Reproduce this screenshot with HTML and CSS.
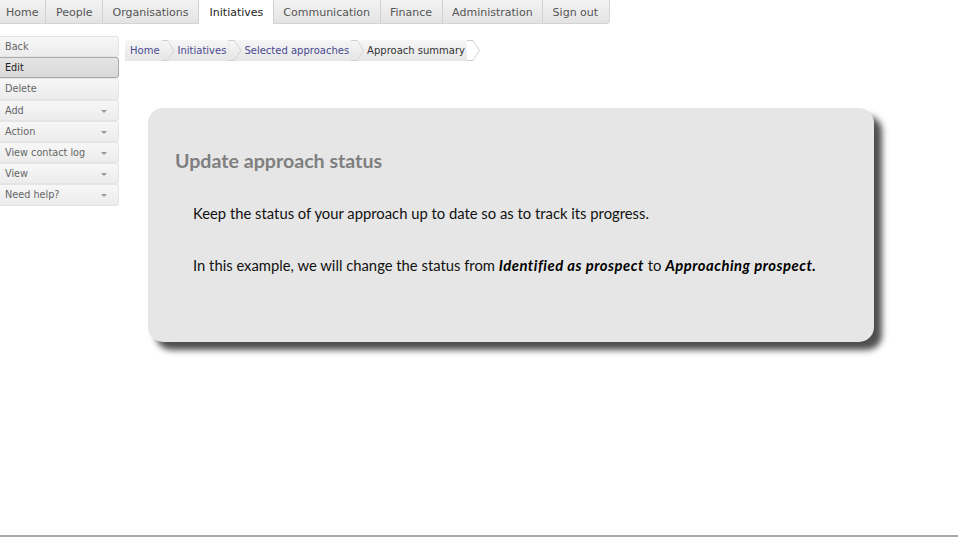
FILE: index.html
```html
<!DOCTYPE html>
<html>
<head>
<meta charset="utf-8">
<link rel="stylesheet" href="styles.css">
</head>
<body>
<nav class="topnav">
  <a class="tab first">Home</a>
  <a class="tab">People</a>
  <a class="tab">Organisations</a>
  <a class="tab active">Initiatives</a>
  <a class="tab">Communication</a>
  <a class="tab">Finance</a>
  <a class="tab">Administration</a>
  <a class="tab last">Sign out</a>
</nav>
<div class="main">
  <aside class="side">
    <div class="item">Back</div>
    <div class="item sel">Edit</div>
    <div class="item">Delete</div>
    <div class="item dd">Add<span class="arr"></span></div>
    <div class="item dd">Action<span class="arr"></span></div>
    <div class="item dd">View contact log<span class="arr"></span></div>
    <div class="item dd">View<span class="arr"></span></div>
    <div class="item dd">Need help?<span class="arr"></span></div>
  </aside>
  <section class="content">
    <div class="crumbs">
      <span class="crumb link">Home</span>
      <span class="crumb link">Initiatives</span>
      <span class="crumb link">Selected approaches</span>
      <span class="crumb cur">Approach summary</span>
    </div>
    <div class="card">
      <h2 class="title">Update approach status</h2>
      <p class="txt">Keep the status of your approach up to date so as to track its progress.</p>
      <p class="txt">In this example, we will change the status from <b><i>Identified as prospect</i></b> to <b><i>Approaching prospect.</i></b></p>
    </div>
  </section>
</div>
<div class="bottomline"></div>
</body>
</html>
```

FILE: styles.css
```css
html, body {
  margin: 0;
  padding: 0;
  background: #fff;
}
body {
  width: 958px;
  height: 537px;
  position: relative;
  overflow: hidden;
  font-family: "DejaVu Sans", Verdana, sans-serif;
}
.topnav {
  display: flex;
  width: max-content;
  height: 23px;
  border: 1px solid #d4d4d4;
  border-top: none;
  border-left: none;
  border-radius: 0 0 4px 0;
  background: linear-gradient(#f3f3f3, #e3e3e3);
}
.tab {
  display: flex;
  align-items: center;
  padding: 1px 9.5px 0 9.5px;
  font-size: 11px;
  color: #555;
  border-right: 1px solid #d0d0d0;
  height: 23px;
  box-sizing: border-box;
}
.tab.first { padding-left: 6px; padding-right: 7px; }
.tab.last { border-right: none; padding-right: 11px; }
.tab.active {
  background: #fff;
  color: #222;
  border-left: 1px solid #d0d0d0;
  margin-left: -1px;
  height: 24px;
  padding: 1px 9.5px 0 10.5px;
}
.main {
  display: flex;
  gap: 6px;
  margin-top: 12px;
}
.side {
  width: 119px;
  display: flex;
  flex-direction: column;
}
.item {
  height: 21.2px;
  box-sizing: border-box;
  border: 1px solid #e4e4e4;
  border-left: none;
  border-radius: 0 3px 3px 0;
  background: linear-gradient(#f7f7f7, #ececec);
  font-size: 9.7px;
  color: #666;
  padding-left: 5px;
  display: flex;
  align-items: center;
  position: relative;
}
.item.sel {
  background: linear-gradient(#e4e4e4, #d9d9d9);
  border: 1px solid #aaa;
  border-left: none;
  color: #222;
}
.arr {
  position: absolute;
  right: 11px;
  top: 9px;
  width: 0;
  height: 0;
  border-left: 3px solid transparent;
  border-right: 3px solid transparent;
  border-top: 3px solid #999;
}
.content {
  flex: 1;
  display: flex;
  flex-direction: column;
}
.crumbs {
  display: flex;
  height: 21px;
  margin-top: 4px;
  width: max-content;
}
.crumb {
  position: relative;
  display: flex;
  align-items: center;
  font-size: 10px;
  padding: 0 9px 0 5px;
  background: linear-gradient(#f6f6f6, #e6e6e6);
}
.crumb + .crumb { padding-left: 9px; }
.crumb::after {
  content: "";
  position: absolute;
  right: -5px;
  top: 1px;
  width: 12px;
  height: 19px;
  background: linear-gradient(#f6f6f6, #e6e6e6);
  clip-path: polygon(0 0, 6px 0, 12px 50%, 6px 100%, 0 100%);
  z-index: 1;
}
.crumb::before {
  content: "";
  position: absolute;
  right: -6px;
  top: 0;
  width: 13px;
  height: 21px;
  background: #cfcfcf;
  clip-path: polygon(0 0, 6px 0, 13px 50%, 6px 100%, 0 100%);
  z-index: 1;
}
.crumb.cur::after { background: #fff; }
.crumb.link { color: #4a4a8e; }
.crumb.cur { color: #333; }
.card {
  margin-top: 47px;
  margin-left: 23px;
  width: 726px;
  height: 234px;
  box-sizing: border-box;
  background: #e6e6e6;
  border-radius: 15px;
  box-shadow: 8px 8px 6px #4f4f4f;
  padding: 41px 27px 0 27px;
  font-family: Lato, "Open Sans", sans-serif;
}
.title {
  margin: 0 0 32px 0;
  font-size: 19.6px;
  font-weight: bold;
  color: #7f7f7f;
}
.txt {
  margin: 0 0 34px 18px;
  font-size: 14.8px;
  color: #111;
}
.txt b { color: #000; letter-spacing: 0.5px; }
.bottomline {
  position: absolute;
  left: 0;
  right: 0;
  top: 535px;
  height: 2px;
  background: #a9a9a9;
}
```
